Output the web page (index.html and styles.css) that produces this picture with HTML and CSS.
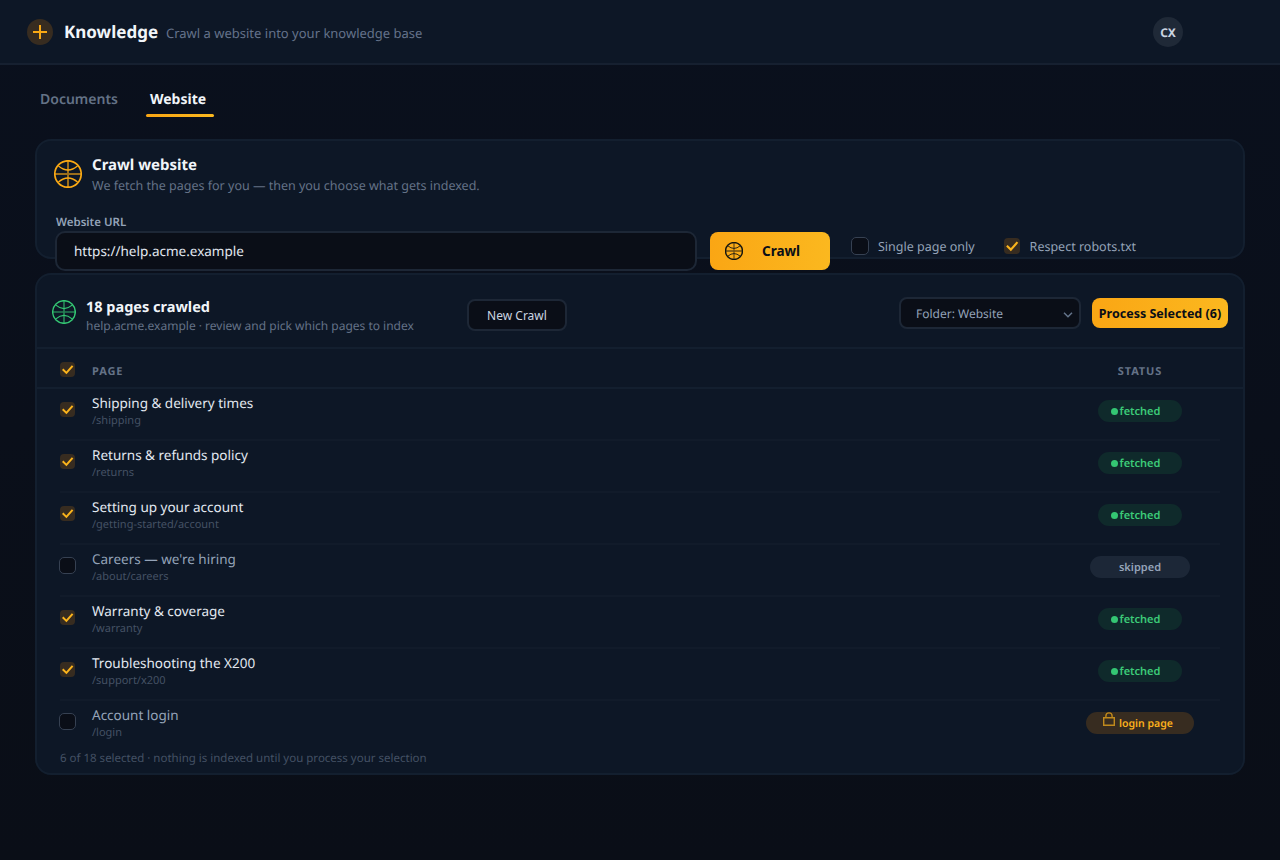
FILE: index.html
```html
<!DOCTYPE html>
<html lang="en">
  <head>
    <meta charset="utf-8">
    <title>Knowledge</title>
    <link rel="stylesheet" href="styles.css">
  </head>
  <body>
    <svg class="defs" width="0" height="0">
      <symbol id="globe" viewBox="0 0 28 28">
        <circle cx="14" cy="14" r="13.2"/>
        <path class="axis" d="M1 14h26M14 1v26"/>
        <path class="arc" d="M4.5 6Q14 14 23.5 6M4.5 22Q14 14 23.5 22"/>
      </symbol>
      <symbol id="check" viewBox="0 0 15 15">
        <path d="M2.7 7.3l3.7 3.6 6.2-7"/>
      </symbol>
    </svg>

    <header class="topbar">
      <div class="logo">
        <svg width="14" height="14" viewBox="0 0 14 14"><path d="M7 0v14M0 7h14"/></svg>
      </div>
      <h1>Knowledge</h1>
      <span class="tagline">Crawl a website into your knowledge base</span>
      <div class="avatar">CX</div>
    </header>

    <nav class="tabs">
      <a class="tab">Documents</a>
      <a class="tab active">Website</a>
    </nav>

    <section class="panel crawl">
      <div class="crawl-head">
        <svg class="globe amber" width="28" height="28"><use href="#globe"/></svg>
        <div>
          <h2>Crawl website</h2>
          <p class="sub">We fetch the pages for you — then you choose what gets indexed.</p>
        </div>
      </div>
      <div class="label">Website URL</div>
      <div class="crawl-form">
        <div class="input">https://help.acme.example</div>
        <button class="btn primary crawl-btn">
          <svg class="globe dark" width="18" height="18"><use href="#globe"/></svg>
          <span>Crawl</span>
        </button>
        <div class="option"><span class="box"></span>Single page only</div>
        <div class="option robots"><span class="box checked"><svg><use href="#check"/></svg></span>Respect robots.txt</div>
      </div>
    </section>

    <section class="panel results">
      <div class="results-head">
        <svg class="globe green" width="24" height="24"><use href="#globe"/></svg>
        <div class="results-title">
          <h2>18 pages crawled</h2>
          <p class="sub">help.acme.example · review and pick which pages to index</p>
        </div>
        <button class="btn secondary">New Crawl</button>
        <div class="select">
          <span>Folder: Website</span>
          <svg width="10" height="6" viewBox="0 0 10 6"><path d="M1 .8l4 4 4-4"/></svg>
        </div>
        <button class="btn primary process">Process Selected (6)</button>
      </div>

      <div class="table-head">
        <span class="box checked"><svg><use href="#check"/></svg></span>
        <span>PAGE</span>
        <span class="status">STATUS</span>
      </div>

      <div class="rows">
        <div class="row">
          <span class="box checked"><svg><use href="#check"/></svg></span>
          <div><div class="name">Shipping &amp; delivery times</div><div class="path">/shipping</div></div>
          <div class="status"><span class="pill fetched">fetched</span></div>
        </div>
        <div class="row">
          <span class="box checked"><svg><use href="#check"/></svg></span>
          <div><div class="name">Returns &amp; refunds policy</div><div class="path">/returns</div></div>
          <div class="status"><span class="pill fetched">fetched</span></div>
        </div>
        <div class="row">
          <span class="box checked"><svg><use href="#check"/></svg></span>
          <div><div class="name">Setting up your account</div><div class="path">/getting-started/account</div></div>
          <div class="status"><span class="pill fetched">fetched</span></div>
        </div>
        <div class="row off">
          <span class="box"></span>
          <div><div class="name">Careers — we're hiring</div><div class="path">/about/careers</div></div>
          <div class="status"><span class="pill skipped">skipped</span></div>
        </div>
        <div class="row">
          <span class="box checked"><svg><use href="#check"/></svg></span>
          <div><div class="name">Warranty &amp; coverage</div><div class="path">/warranty</div></div>
          <div class="status"><span class="pill fetched">fetched</span></div>
        </div>
        <div class="row">
          <span class="box checked"><svg><use href="#check"/></svg></span>
          <div><div class="name">Troubleshooting the X200</div><div class="path">/support/x200</div></div>
          <div class="status"><span class="pill fetched">fetched</span></div>
        </div>
        <div class="row off">
          <span class="box"></span>
          <div><div class="name">Account login</div><div class="path">/login</div></div>
          <div class="status">
            <span class="pill login">
              <svg width="12" height="14" viewBox="0 0 12 14"><path d="M.7 5.7h10.6v7.6H.7zM2.9 5.7V4a3.1 3.1 0 0 1 6.2 0v1.7"/></svg>login page
            </span>
          </div>
        </div>
      </div>
      <p class="summary">6 of 18 selected · nothing is indexed until you process your selection</p>
    </section>
  </body>
</html>
```

FILE: styles.css
```css
* {
  box-sizing: border-box;
}
body {
  margin: 0;
  height: 860px;
  overflow: hidden;
  background: linear-gradient(#0a101d, #0a0e17);
  color: #f1f5f9;
  font-family: "Noto Sans", sans-serif;
  font-size: 13px;
  text-rendering: geometricPrecision;
}
h1, h2, p {
  margin: 0;
}
svg {
  display: block;
  fill: none;
}
.defs {
  position: absolute;
}

/* header */
.topbar {
  display: flex;
  align-items: center;
  height: 65px;
  padding: 0 97px 0 27px;
  border-bottom: 2px solid #162030;
  background: #0d1726;
}
.logo {
  display: flex;
  align-items: center;
  justify-content: center;
  width: 26px;
  height: 26px;
  margin-top: 1px;
  border-radius: 50%;
  background: #372c20;
}
.logo path {
  stroke: #faa914;
  stroke-width: 2;
}
h1 {
  width: 94px;
  margin-left: 11px;
  font-size: 17px;
  font-weight: 700;
  line-height: 24px;
}
.tagline {
  margin: 3px 0 0 8px;
  color: #64728a;
}
.avatar {
  width: 30px;
  height: 30px;
  margin-left: auto;
  border-radius: 50%;
  background: #1f2937;
  color: #cbd5e1;
  font-size: 12px;
  font-weight: 700;
  line-height: 31px;
  text-align: center;
}

/* tabs */
.tabs {
  display: flex;
  gap: 20px;
  height: 74px;
  padding: 23px 0 0 36px;
}
.tab {
  height: 30px;
  padding: 0 4px;
  color: #647286;
  font-size: 14px;
  font-weight: 600;
  line-height: 24px;
}
.tab.active {
  width: 76px;
  padding: 0 8px;
  color: #f1f5f9;
  font-weight: 700;
}
.tab.active::after {
  content: "";
  display: block;
  height: 3px;
  margin: 2px -4px 0;
  border-radius: 2px;
  background: linear-gradient(90deg, #faa614, #fbb81f);
}

.panel {
  margin: 0 35px;
  border: 2px solid #131f2f;
  border-radius: 16px;
  background: #0d1726;
}
h2 {
  font-size: 15px;
  font-weight: 700;
  line-height: 20px;
}
.sub {
  color: #647286;
  font-size: 12px;
  line-height: 18px;
}

/* crawl form */
.crawl {
  height: 120px;
  padding: 14px 17px 0;
}
.crawl-head {
  display: flex;
  gap: 10px;
  height: 60px;
}
.crawl-head .globe {
  margin-top: 5px;
}
.crawl-head .sub {
  margin-top: 2px;
  font-size: 12.5px;
}
.label {
  height: 16px;
  padding-left: 2px;
  color: #94a3b8;
  font-size: 11.5px;
  font-weight: 600;
  line-height: 16px;
}
.crawl-form {
  display: flex;
  align-items: flex-start;
  margin-left: 1px;
}
.input {
  width: 642px;
  height: 40px;
  padding-left: 17px;
  border: 2px solid #1d2736;
  border-radius: 10px;
  background: #0a0e17;
  color: #e2e8f0;
  font-size: 13.5px;
  line-height: 36px;
}
.btn {
  padding: 0;
  border: 0;
  border-radius: 8px;
  font-family: inherit;
  text-align: center;
}
.primary {
  background: linear-gradient(90deg, #faa614, #fbb81f);
  color: #0a0e17;
  font-weight: 700;
}
.crawl-btn {
  display: flex;
  align-items: center;
  gap: 19px;
  width: 120px;
  height: 38px;
  margin: 1px 21px 0 13px;
  padding-left: 15px;
  font-size: 13.5px;
}
.option {
  display: flex;
  align-items: flex-start;
  gap: 9px;
  height: 18px;
  margin-top: 6px;
  color: #94a3b8;
  font-size: 12.5px;
  line-height: 20px;
}
.robots {
  gap: 10px;
  margin-left: 28px;
}

.globe {
  flex: none;
  stroke-width: 1.7;
}
.axis {
  stroke-width: 2;
  opacity: 0.6;
}
.globe.amber {
  stroke: #faa914;
}
.globe.green {
  stroke: #34c673;
}
.globe.dark {
  stroke: #161610;
  stroke-width: 2.2;
}
.arc {
  stroke-width: 1.4;
}

.box {
  width: 17px;
  height: 17px;
  border: 1.5px solid #364152;
  border-radius: 5px;
  background: #0a0e17;
}
.box.checked {
  width: 15px;
  height: 15px;
  margin-left: 1px;
  border: 0;
  border-radius: 4px;
  background: #372c20;
}
.box.checked svg {
  width: 100%;
  height: 100%;
  stroke: #fbb41c;
  stroke-width: 2;
}
.option .box {
  width: 18px;
  height: 18px;
}
.option .box.checked {
  width: 16px;
  height: 16px;
  margin-top: 1px;
}

/* results */
.results {
  height: 502px;
  margin-top: 14px;
}
.results-head {
  display: flex;
  align-items: flex-start;
  height: 74px;
  padding: 22px 15px 0;
  border-bottom: 2px solid #131f2f;
}
.results-head .globe {
  margin-top: 3px;
}
.results-title {
  width: 371px;
  margin: 0 0 0 10px;
}
.results-title h2 {
  font-size: 14.5px;
}
.secondary {
  width: 100px;
  height: 32px;
  margin-top: 2px;
  margin-left: 10px;
  border: 2px solid #1d2736;
  background: #0a0e17;
  color: #cbd5e1;
  font-size: 12px;
}
.select {
  display: flex;
  align-items: center;
  justify-content: space-between;
  width: 182px;
  height: 32px;
  margin-left: auto;
  padding: 0 6px 0 15px;
  border: 2px solid #1d2736;
  border-radius: 8px;
  background: #0a0e17;
  color: #94a3b8;
  font-size: 12px;
}
.select svg {
  margin-top: 4px;
}
.select path {
  stroke: #64748b;
  stroke-width: 1.5;
}
.process {
  width: 136px;
  height: 30px;
  margin: 1px 0 0 11px;
  font-size: 12.5px;
}
.table-head, .row {
  display: grid;
  grid-template-columns: 33px 1fr 160px;
}
.table-head {
  height: 40px;
  padding: 13px 23px 0 22px;
  border-bottom: 2px solid #131f2f;
  color: #647286;
  font-size: 11px;
  font-weight: 700;
  letter-spacing: 0.9px;
  line-height: 20px;
}
.status {
  text-align: center;
}
.rows {
  padding: 0 23px;
}
.row {
  height: 52px;
  margin-left: -1px;
  background: linear-gradient(#111b2a, #111b2a) 1px 100% / 100% 2px no-repeat;
}
.row:last-child {
  background: none;
}
.row .box {
  margin-top: 12px;
}
.row .box.checked {
  margin-top: 13px;
}
.name {
  margin-top: 4px;
  color: #e2e8f0;
  font-size: 13.5px;
  line-height: 20px;
}
.path {
  color: #445164;
  font-size: 11px;
  line-height: 16px;
}
.off .name {
  color: #94a3b8;
}
.pill {
  position: relative;
  display: inline-block;
  width: 84px;
  height: 22px;
  margin-top: 11px;
  border-radius: 11px;
  font-size: 11px;
  font-weight: 600;
  line-height: 24px;
  vertical-align: top;
}
.fetched {
  background: #0f2a2b;
  color: #3ccb78;
}
.fetched::before {
  content: "";
  position: absolute;
  top: 7.5px;
  left: 12.5px;
  width: 7px;
  height: 7px;
  border-radius: 50%;
  background: #34c673;
}
.skipped {
  width: 100px;
  background: #1c2737;
  color: #94a3b8;
}
.login {
  width: 108px;
  padding-left: 12px;
  background: #372c20;
  color: #fbb01c;
  font-size: 10.5px;
}
.login svg {
  position: absolute;
  top: 0;
  left: 17px;
  stroke: #c08a1c;
  stroke-width: 1.4;
}
.summary {
  padding-left: 23px;
  margin-top: -4px;
  color: #445164;
  font-size: 11.5px;
  line-height: 20px;
}
```
